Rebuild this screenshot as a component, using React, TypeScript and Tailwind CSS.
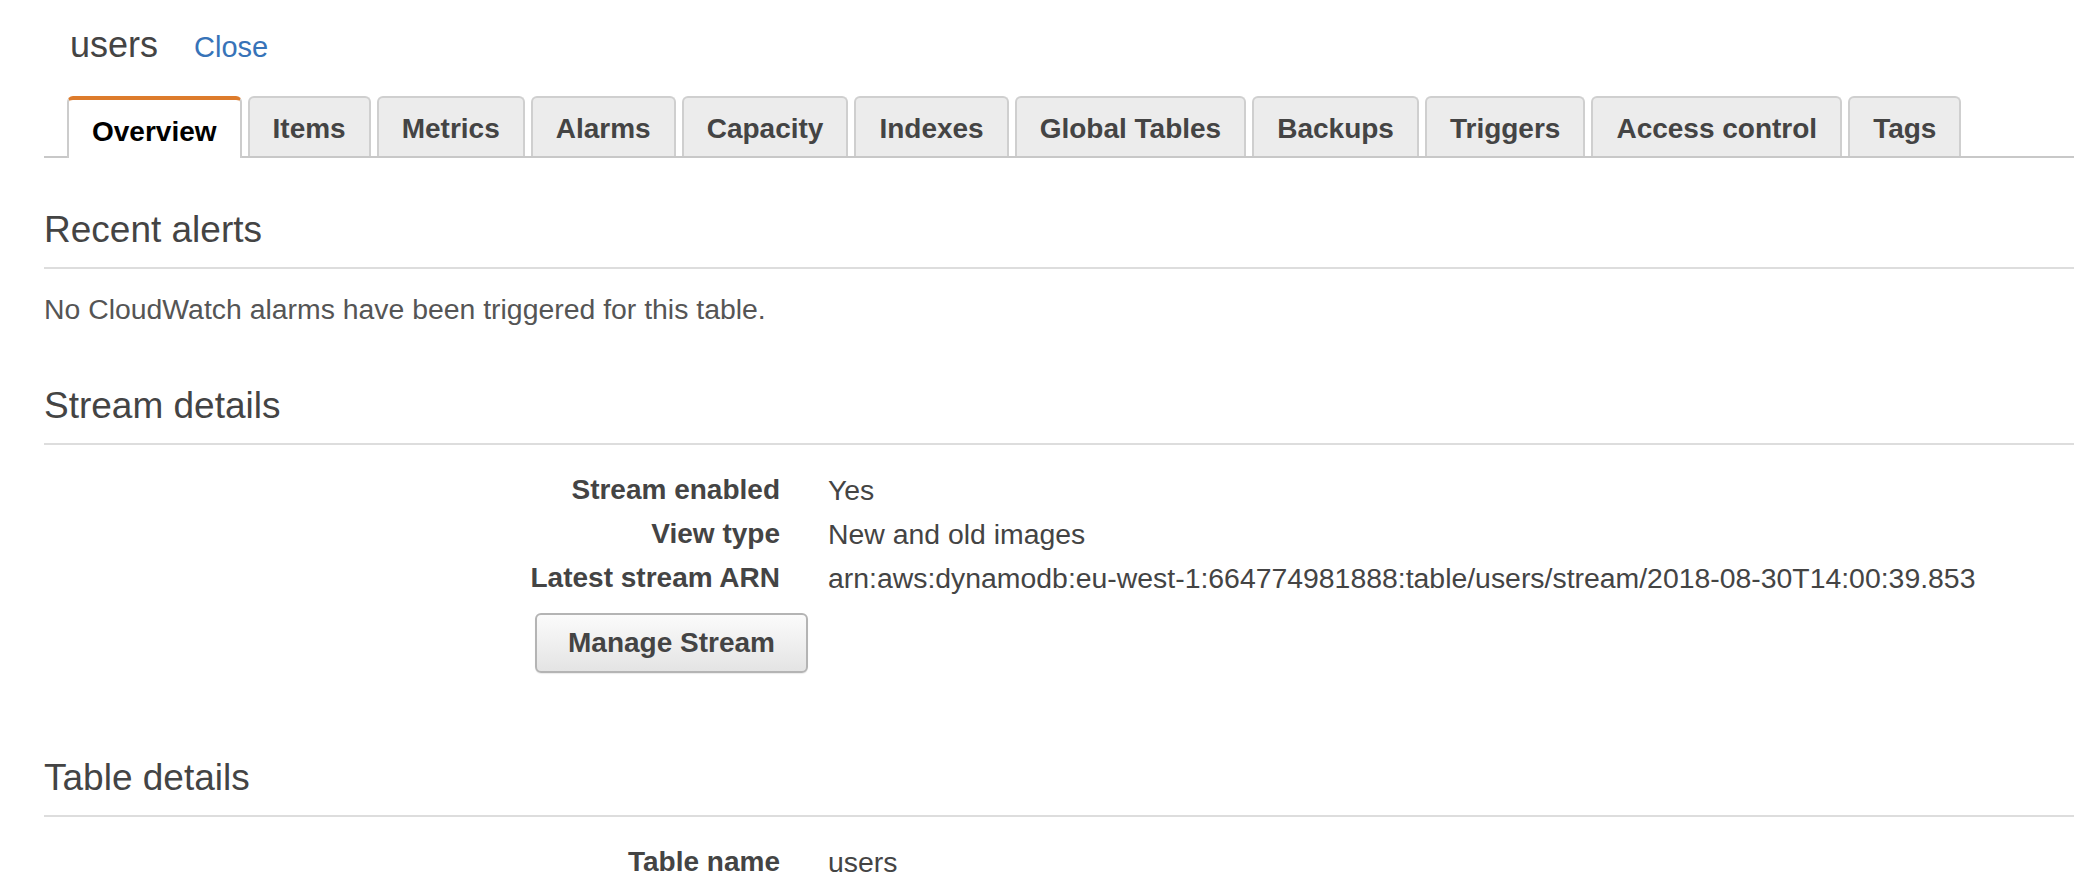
const tabs = [
  "Overview",
  "Items",
  "Metrics",
  "Alarms",
  "Capacity",
  "Indexes",
  "Global Tables",
  "Backups",
  "Triggers",
  "Access control",
  "Tags",
];

const streamRows = [
  { label: "Stream enabled", value: "Yes" },
  { label: "View type", value: "New and old images" },
  {
    label: "Latest stream ARN",
    value:
      "arn:aws:dynamodb:eu-west-1:664774981888:table/users/stream/2018-08-30T14:00:39.853",
  },
];

const SectionTitle = ({ title }: { title: string }) => {
  return (
    <h2 className="text-[37px] leading-[44px] text-[#444444] pb-[15px] border-b-2 border-[#dddddd]">
      {title}
    </h2>
  );
};

const DetailRow = ({ label, value }: { label: string; value: string }) => {
  return (
    <div className="flex text-[28px] leading-[44px] whitespace-nowrap">
      <div className="w-[736px] shrink-0 text-right font-bold text-[#444444]">
        {label}
      </div>
      <div className="pl-12 text-[28.4px] text-[#444444]">{value}</div>
    </div>
  );
};

export default function App() {
  return (
    <div className="w-[2074px] h-[890px] overflow-hidden bg-white pl-[44px] font-['Liberation_Sans',Arial,sans-serif] text-[#444444]">
      <div className="flex items-baseline pl-[26px] pt-[23px] leading-[44px]">
        <span className="text-[36px] text-[#444444]">users</span>
        <a href="#" className="ml-[36px] text-[29px] text-[#3773b8]">
          Close
        </a>
      </div>

      <div className="mt-[27px] flex items-end gap-[6px] pl-[23px] border-b-2 border-[#c8c8c8]">
        {tabs.map((tab, i) => {
          if (i === 0) {
            return (
              <div
                key={tab}
                className="-mb-[2px] h-[62px] rounded-t-[6px] border-2 border-b-0 border-[#cccccc] border-t-[4px] border-t-[#dd7b2b] bg-white px-[23px] pt-[16px] text-[28px] leading-[32px] font-bold text-black whitespace-nowrap"
              >
                {tab}
              </div>
            );
          }
          return (
            <div
              key={tab}
              className="h-[60px] rounded-t-[6px] border-2 border-b-0 border-[#cfcfcf] bg-[#ececec] px-[23px] pt-[15px] text-[28px] leading-[32px] font-bold text-[#444444] whitespace-nowrap"
            >
              {tab}
            </div>
          );
        })}
      </div>

      <div className="mt-[50px]">
        <SectionTitle title="Recent alerts" />
        <p className="mt-[20px] text-[28.4px] leading-[40px] text-[#555555]">
          No CloudWatch alarms have been triggered for this table.
        </p>
      </div>

      <div className="mt-[55px]">
        <SectionTitle title="Stream details" />
        <div className="mt-[23px]">
          {streamRows.map((row) => (
            <DetailRow key={row.label} label={row.label} value={row.value} />
          ))}
        </div>
        <button className="mt-[13px] ml-[491px] h-[60px] rounded-[6px] border-2 border-[#b4b4b4] bg-gradient-to-b from-[#fbfbfb] to-[#e4e4e4] px-[31px] text-[28px] font-bold text-[#444444] shadow-[0_1px_1px_rgba(0,0,0,0.08)]">
          Manage Stream
        </button>
      </div>

      <div className="mt-[83px]">
        <SectionTitle title="Table details" />
        <div className="mt-[23px]">
          <DetailRow label="Table name" value="users" />
        </div>
      </div>
    </div>
  );
}
